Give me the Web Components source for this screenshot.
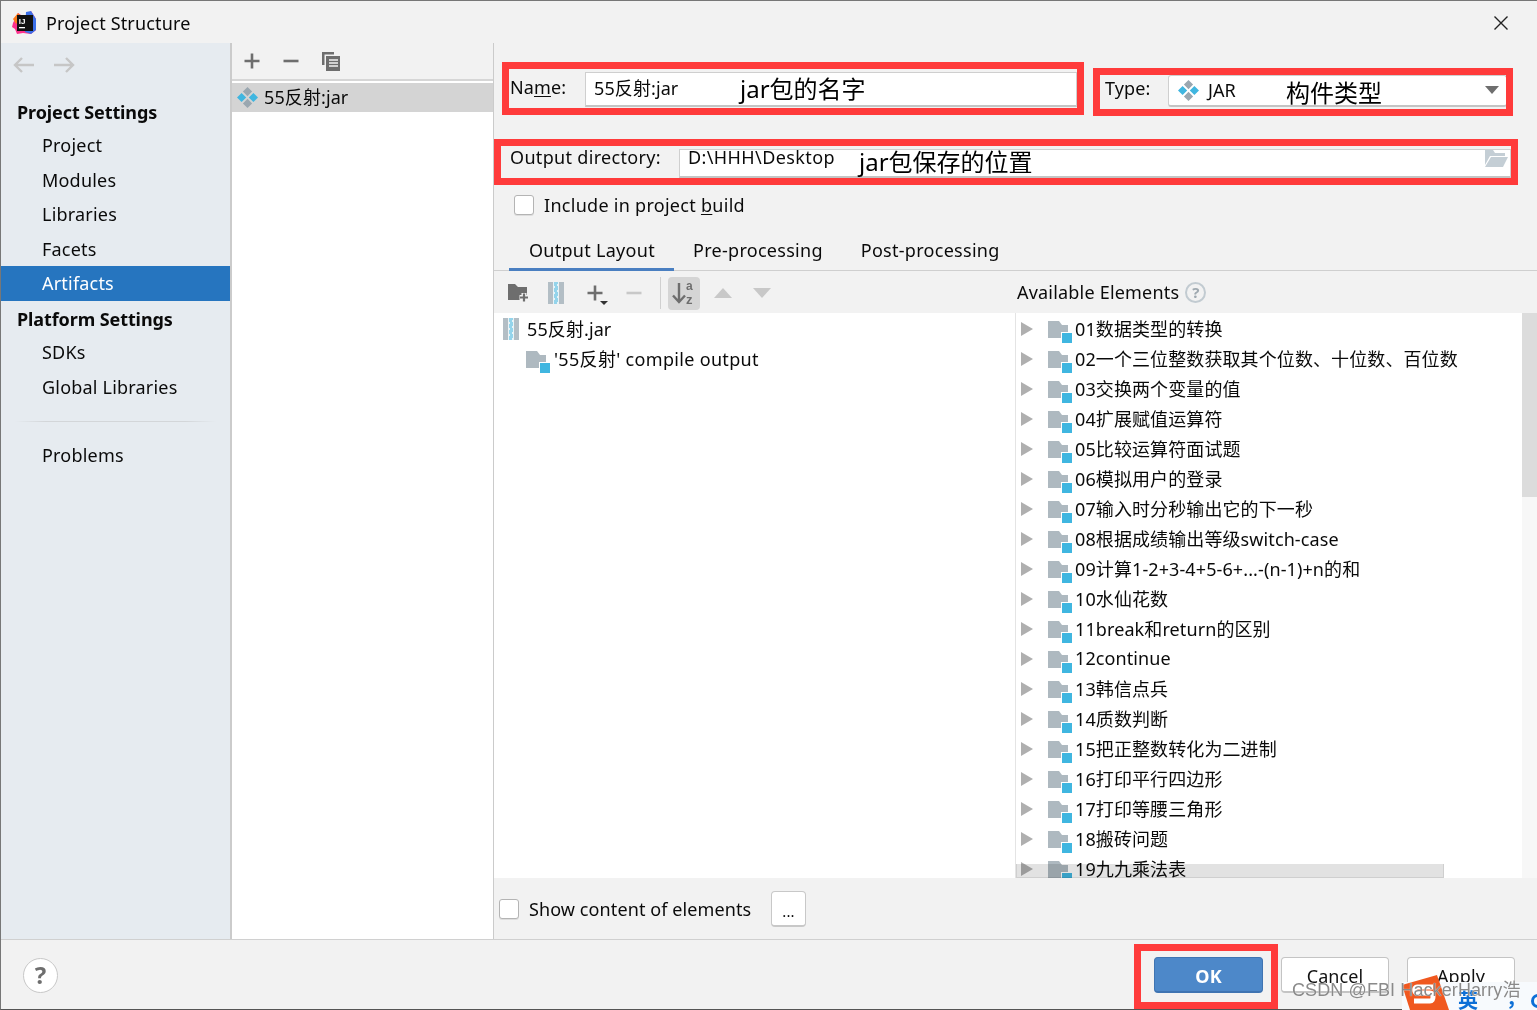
<!DOCTYPE html>
<html><head><meta charset="utf-8">
<style>
html,body{margin:0;padding:0;background:#fff;}
body{width:1537px;height:1010px;overflow:hidden;font-family:"Noto Sans","Noto Sans CJK SC",sans-serif;font-size:18px;letter-spacing:.1px;color:#0a0a0a;}
</style></head>
<body>
<ps-dialog></ps-dialog>
<script>
const ICONS={
 artifact:(s=21)=>`<svg width="${s}" height="${s}" viewBox="0 0 21 21"><path d="M10.500 0l4.600 4.600-4.600 4.600-4.600-4.600z M10.500 11.800l4.600 4.600-4.600 4.600-4.600-4.600z" fill="#9aa7b0"/><path d="M4.600 5.900l4.600 4.600-4.600 4.600L0 10.500z M16.400 5.900l4.600 4.600-4.600 4.600-4.600-4.600z" fill="#40b6e0"/></svg>`,
 folder:()=>`<svg width="24" height="22" viewBox="0 0 24 22" style="margin-top:6px"><path d="M0 0h11l3 4h6v13H0z" fill="#aeb9c0"/><rect x="13" y="11" width="11" height="11" fill="#fff"/><rect x="14" y="12" width="10" height="10" fill="#40b6e0"/></svg>`,
 zip:()=>`<svg width="16" height="22" viewBox="0 0 16 22"><rect width="16" height="22" fill="#b3bec5"/><rect x="5" y="0" width="6" height="22" fill="#e8f3f7"/><path d="M6 1h4M6 3h3M7 5h3M6 7h4M6 9h3M7 11h3M6 13h4M6 15h3M7 17h3M6 19h4M6 21h3" stroke="#40b6e0" stroke-width="1.2"/></svg>`,
 tri:()=>`<svg width="12" height="14" viewBox="0 0 12 14"><path d="M0 0l12 7L0 14z" fill="#afafaf"/></svg>`,
 plus:(c='#6e6e6e')=>`<svg width="18" height="18" viewBox="0 0 18 18"><path d="M9 1.500v15M1.500 9h15" stroke="${c}" stroke-width="2.600"/></svg>`,
 minus:(c='#6e6e6e')=>`<svg width="18" height="18" viewBox="0 0 18 18"><path d="M1.500 9h15" stroke="${c}" stroke-width="2.600"/></svg>`,
 copy:()=>`<svg width="20" height="20" viewBox="0 0 20 20"><path d="M1 1h12v2.500H3.500V14H1z" fill="#6e6e6e"/><path d="M5 5h14v15H5z" fill="#6e6e6e"/><path d="M8 9h9M8 12h9M8 15h9" stroke="#f2f2f2" stroke-width="1.300"/></svg>`,
 back:()=>`<svg width="22" height="16" viewBox="0 0 22 16"><path d="M21 8H2M9 1L2 8l7 7" fill="none" stroke="#c6c6c6" stroke-width="2.400"/></svg>`,
 fwd:()=>`<svg width="22" height="16" viewBox="0 0 22 16"><path d="M1 8h19M13 1l7 7-7 7" fill="none" stroke="#c6c6c6" stroke-width="2.400"/></svg>`,
 close:()=>`<svg width="16" height="16" viewBox="0 0 16 16" style="margin-top:1px"><path d="M1.500 1.500l13 13M14.500 1.500l-13 13" stroke="#222" stroke-width="1.400"/></svg>`,
 newdir:()=>`<svg width="22" height="20" viewBox="0 0 22 20"><path d="M0 1h7l3 3h9v13H0z" fill="#6e6e6e"/><path d="M16 10v9M11.500 14.500h9" stroke="#f2f2f2" stroke-width="5"/><path d="M16 10.500v8M12 14.500h8" stroke="#6e6e6e" stroke-width="2.200"/></svg>`,
 sort:()=>`<svg width="26" height="26" viewBox="0 0 26 26"><path d="M8 3v19M2 15.500l6 6.500 6-6.500" fill="none" stroke="#6e6e6e" stroke-width="2.400"/><text x="15" y="10" font-family="Liberation Sans,sans-serif" font-weight="700" font-size="12" fill="#6e6e6e">a</text><text x="15" y="24" font-family="Liberation Sans,sans-serif" font-weight="700" font-size="13" fill="#6e6e6e">z</text></svg>`,
 up:()=>`<svg width="18" height="10" viewBox="0 0 18 10"><path d="M9 0l9 10H0z" fill="#c8c8c8"/></svg>`,
 down:()=>`<svg width="18" height="10" viewBox="0 0 18 10"><path d="M0 0h18L9 10z" fill="#c8c8c8"/></svg>`,
 open:()=>`<svg width="23" height="18" viewBox="0 0 23 18" style="margin-bottom:8px"><path d="M0 0h8l2 3h10v3H5L0 15z" fill="#c4ced5"/><path d="M6 7h17l-5 10H0z" fill="#c4ced5"/></svg>`,
 ij:()=>`<svg width="25" height="25" viewBox="0 0 25 25"><path d="M1 13L6 3l6 4 7-6 5 8v11l-5 4-8-1-6 1-2-5-3-2z" fill="#fc318c"/><path d="M14 2l5-1 5 8v11l-5 4-6-2z" fill="#3b6fe8"/><path d="M1 9l5-6 4 4-6 7z" fill="#ff7a1a"/><rect x="5" y="5" width="16" height="16" fill="#111"/><rect x="7" y="17" width="6" height="1.300" fill="#fff"/><text x="6.800" y="14" font-family="Liberation Sans,sans-serif" font-weight="700" font-size="8" fill="#fff">IJ</text></svg>`
};

class Base extends HTMLElement{
 constructor(){super();this.attachShadow({mode:'open'});}
 set html(h){this.shadowRoot.innerHTML=h;}
}
class PsCheck extends Base{connectedCallback(){this.html=`<style>:host{display:flex;align-items:center;gap:10px;white-space:nowrap;letter-spacing:.28px}
 i{display:block;flex:none;width:18px;height:18px;background:#fff;border:1px solid #b4b4b4;border-radius:3px;box-shadow:0 1px 0 #ddd}</style><i></i><span><slot></slot></span>`;}}
customElements.define('ps-check',PsCheck);

class PsButton extends Base{connectedCallback(){const p=this.hasAttribute('primary');this.html=`<style>:host{display:block;box-sizing:border-box;height:36px;border-radius:4px;text-align:center;line-height:36px;
 background:${p?'#4d88c9':'#fff'};border:1px solid ${p?'#3f74b2':'#c4c4c4'};border-bottom-width:2px;color:${p?'#fff':'#111'};font-weight:${p?700:400}}</style><slot></slot>`;}}
customElements.define('ps-button',PsButton);

class PsTitlebar extends Base{connectedCallback(){this.html=`<style>:host{display:flex;align-items:center;height:42px;background:#f2f2f2;padding-left:11px;padding-right:28px;flex:none}
 span{margin-left:9px;flex:1;padding-top:2px;letter-spacing:.15px}</style>${ICONS.ij()}<span>Project Structure</span>${ICONS.close()}`;}}
customElements.define('ps-titlebar',PsTitlebar);

class PsNavItem extends Base{connectedCallback(){const h=this.hasAttribute('head'),s=this.hasAttribute('selected');this.html=`<style>:host{display:block;box-sizing:border-box;height:${h?32:34.5}px;line-height:${h?32:34.5}px;padding-left:${h?16:41}px;
 letter-spacing:${h?'-.1px':'.2px'};font-weight:${h?700:400};background:${s?'#2675bf':'none'};color:${s?'#fff':'inherit'}}</style><slot></slot>`;}}
customElements.define('ps-nav-item',PsNavItem);

class PsSidebar extends Base{connectedCallback(){this.html=`<style>:host{display:block;width:229px;flex:none;background:#e6ebf0;border-right:2px solid #cbcbcb}
 .nav{display:flex;gap:18px;padding:14px 0 0 12px;height:39px}
 hr{border:0;height:1px;margin:17px 14px 16px;background:linear-gradient(90deg,#e6ebf0,#d3d6d9 15%,#d3d6d9 85%,#e6ebf0)}
 .sp{height:2.500px}</style>
 <div class="nav">${ICONS.back()}${ICONS.fwd()}</div>
 <ps-nav-item head>Project Settings</ps-nav-item>
 <ps-nav-item>Project</ps-nav-item><ps-nav-item>Modules</ps-nav-item><ps-nav-item>Libraries</ps-nav-item><ps-nav-item>Facets</ps-nav-item>
 <ps-nav-item selected>Artifacts</ps-nav-item><div class="sp"></div>
 <ps-nav-item head>Platform Settings</ps-nav-item>
 <ps-nav-item>SDKs</ps-nav-item><ps-nav-item>Global Libraries</ps-nav-item>
 <hr><ps-nav-item>Problems</ps-nav-item>`;}}
customElements.define('ps-sidebar',PsSidebar);

class PsArtifacts extends Base{connectedCallback(){this.html=`<style>:host{display:flex;flex-direction:column;width:261px;flex:none;background:#fff;border-right:1px solid #cbcbcb}
 .bar{display:flex;align-items:center;gap:21px;height:36px;background:#f2f2f2;padding-left:11px;border-bottom:2px solid #d6d6d6}
 .sel{display:flex;align-items:center;gap:6px;height:29px;margin-top:2px;background:#d4d4d4;padding-left:5px}
 span{margin-bottom:3px}</style>
 <div class="bar">${ICONS.plus()}${ICONS.minus()}${ICONS.copy()}</div>
 <div class="sel">${ICONS.artifact()}<span>55反射:jar</span></div>`;}}
customElements.define('ps-artifacts',PsArtifacts);

class PsRow extends Base{connectedCallback(){this.html=`<style>:host{display:flex;align-items:center;height:30px;flex:none;white-space:nowrap}
 .tri{width:32px;padding-left:5px;box-sizing:border-box;display:flex}
 .f{display:flex;margin-right:3px}
 .t{margin-bottom:2px}</style>
 <div class="tri">${ICONS.tri()}</div><div class="f">${ICONS.folder()}</div><span class="t"><slot></slot></span>`;}}
customElements.define('ps-row',PsRow);

class PsAvailable extends Base{connectedCallback(){
 const rows=['01数据类型的转换','02一个三位整数获取其个位数、十位数、百位数','03交换两个变量的值','04扩展赋值运算符','05比较运算符面试题','06模拟用户的登录','07输入时分秒输出它的下一秒','08根据成绩输出等级switch-case','09计算1-2+3-4+5-6+...-(n-1)+n的和','10水仙花数','11break和return的区别','12continue','13韩信点兵','14质数判断','15把正整数转化为二进制','16打印平行四边形','17打印等腰三角形','18搬砖问题','19九九乘法表'];
 this.html=`<style>:host{display:flex;flex:1;min-width:0;background:#fff;border-left:1px solid #e4e4e4;position:relative}
 .list{flex:1;overflow:hidden;padding-top:1px;display:flex;flex-direction:column;padding-left:0}
 .track{width:15px;background:#f7f7f7;flex:none}
 .thumb{height:184px;background:#dcdcdc}
 .hbar{position:absolute;left:0;bottom:0;box-sizing:border-box;width:428px;height:14px;background:#e2e2e2;mix-blend-mode:multiply;border:1px solid #cfcfcf;border-top:0}</style>
 <div class="list">${rows.map(r=>`<ps-row>${r}</ps-row>`).join('')}</div>
 <div class="track"><div class="thumb"></div></div><div class="hbar"></div>`;}}
customElements.define('ps-available',PsAvailable);

class PsEditor extends Base{connectedCallback(){this.html=`<style>
 :host{display:flex;flex-direction:column;flex:1;min-width:0;background:#f2f2f2}
 .r1{display:flex;align-items:flex-end;margin-top:29px;height:35px;padding-left:16px}
 .l1{width:75px;align-self:center;padding-bottom:5px}
 .in{box-sizing:border-box;background:#fff;border:1px solid #cfcfcf;border-bottom:2px solid #c4c4c4;display:flex;align-items:center;padding-left:8px}
 .name{width:492px;height:35px;padding-bottom:5px}
 .l2{margin-left:28px;width:63px;align-self:center;padding-bottom:4px}
 .combo{width:339px;height:32px;border-radius:3px;gap:9px;position:relative;padding-left:9px}
 .combo span{margin-bottom:2px}
 .drop{position:absolute;right:7px;top:10px;width:0;height:0;border:7px solid transparent;border-top:8px solid #6e6e6e;border-bottom:0}
 .r2{display:flex;align-items:center;margin-top:42px;height:29px;padding-left:16px}
 .l3{width:169px;padding-bottom:14px;letter-spacing:.32px}
 .out{width:832px;height:29px;justify-content:space-between;padding-right:2px}
 .out span{margin-bottom:12px;letter-spacing:.4px}
 .inc{margin:16px 0 0 20px;height:22px}
 .tabs{display:flex;margin-top:16px;height:39px;border-bottom:1px solid #cfcfcf;padding-left:15px;box-sizing:border-box;white-space:nowrap;letter-spacing:.28px}
 .tab{padding:0 19px;line-height:36px;box-sizing:border-box;height:39px}
 .tab.on{border-bottom:3px solid #4a7fc1;width:165px;padding:0 20px}
 .tools{display:flex;height:42px;flex:none}
 .tl{width:521px;display:flex;align-items:center;padding:2px 0 0 14px;box-sizing:border-box;position:relative}
 .tl>*{flex:none}
 .tl span{display:flex}
 .sep{width:1px;height:32px;background:#d0d0d0}
 .sortb{width:32px;height:33px;background:#d5d5d5;border-radius:4px;align-items:center;justify-content:center}
 .caret{width:0;height:0;border:4px solid transparent;border-top:4px solid #333;border-bottom:0;margin:20px 17px 0 -4px}
 .tr{display:flex;align-items:center;padding:0 0 0 2px;gap:6px;letter-spacing:.2px}
 .q{box-sizing:border-box;width:21px;height:21px;border:2px solid #c2cbd1;border-radius:50%;color:#9fa9b0;font-size:15px;font-weight:700;text-align:center;line-height:17px}
 .body{flex:1;display:flex;min-height:0;overflow:hidden}
 .left{width:521px;flex:none;background:#fff;padding-top:1px;box-sizing:border-box}
 .lr{display:flex;align-items:center;height:30px;white-space:nowrap}
 .lr span{margin-bottom:2px}
 .bottom{display:flex;align-items:center;height:61px;flex:none;padding-left:5px}
 .bottom ps-check{width:252px;flex:none;letter-spacing:.1px}
 .dots{box-sizing:border-box;width:35px;height:36px;margin-left:20px;background:#fff;border:1px solid #c8c8c8;border-bottom-width:2px;border-radius:4px;text-align:center;line-height:38px;font-size:15px}
 u{text-decoration-thickness:1px;text-underline-offset:2px}
 </style>
 <div class="r1"><span class="l1">Na<u>m</u>e:</span><div class="in name">55反射:jar</div>
  <span class="l2">Type:</span><div class="in combo">${ICONS.artifact()}<span>JAR</span><i class="drop"></i></div></div>
 <div class="r2"><span class="l3">Output directory:</span><div class="in out"><span>D:\\HHH\\Desktop</span>${ICONS.open()}</div></div>
 <ps-check class="inc">Include in project <u>b</u>uild</ps-check>
 <div class="tabs"><div class="tab on">Output Layout</div><div class="tab">Pre-processing</div><div class="tab">Post-processing</div></div>
 <div class="tools">
  <div class="tl"><span style="margin-right:18px">${ICONS.newdir()}</span><span style="margin-right:22px">${ICONS.zip()}</span><span>${ICONS.plus()}</span><i class="caret"></i><span style="margin-right:17px">${ICONS.minus('#c8c8c8')}</span><i class="sep"></i><span class="sortb" style="margin:0 14px 0 7px">${ICONS.sort()}</span><span style="margin-right:21px">${ICONS.up()}</span><span>${ICONS.down()}</span></div>
  <div class="tr">Available Elements<div class="q">?</div></div>
 </div>
 <div class="body">
  <div class="left">
   <div class="lr" style="padding-left:9px;gap:8px">${ICONS.zip()}<span>55反射.jar</span></div>
   <div class="lr" style="padding-left:32px;gap:4px">${ICONS.folder()}<span style="letter-spacing:.32px">'55反射' compile output</span></div>
  </div>
  <ps-available></ps-available>
 </div>
 <div class="bottom"><ps-check>Show content of elements</ps-check><div class="dots">...</div></div>`;}}
customElements.define('ps-editor',PsEditor);

class PsFooter extends Base{connectedCallback(){this.html=`<style>:host{display:flex;align-items:center;flex:1;background:#f2f2f2;border-top:1px solid #d0d0d0;padding:0 22px}
 .help{box-sizing:border-box;width:35px;height:35px;margin-top:2px;border-radius:50%;background:#fff;border:1px solid #c8c8c8;color:#6e6e6e;font-weight:700;font-size:24px;text-align:center;line-height:32px;margin-right:auto}
 ps-button{width:108px;margin-left:18px;margin-top:0}
 ps-button[primary]{width:109px;}</style>
 <div class="help">?</div><ps-button primary>OK</ps-button><ps-button>Cancel</ps-button><ps-button>Apply</ps-button>`;}}
customElements.define('ps-footer',PsFooter);

class PsAnno extends Base{connectedCallback(){const a=this.getAttribute.bind(this);
 this.html=`<style>:host{position:absolute;display:block;box-sizing:border-box;left:${a('x')}px;top:${a('y')}px;width:${a('w')}px;height:${a('h')}px;border:${a('bw')||7}px solid #ff3b3b}</style>`;}}
customElements.define('ps-anno',PsAnno);

class PsLabel extends Base{connectedCallback(){const a=this.getAttribute.bind(this);
 this.html=`<style>:host{position:absolute;display:block;left:${a('x')}px;top:${a('y')}px;font-size:24px;line-height:34px;color:#000;white-space:nowrap;letter-spacing:0}</style><slot></slot>`;}}
customElements.define('ps-label',PsLabel);

class PsSogou extends Base{connectedCallback(){this.html=`<style>:host{position:absolute;display:block;left:1401px;top:981px;width:135px;height:28px;background:#f7fafd;overflow:visible}
 svg{position:absolute;left:0;top:-7px}
 b{position:absolute;font-family:"Noto Sans CJK SC",sans-serif;color:#0d6fd6;font-size:20px;line-height:20px;letter-spacing:0}
 .arc{position:absolute;left:129px;top:12px;width:8px;height:14px;border:3px solid #0d6fd6;border-right:0;border-radius:8px 0 0 8px;box-sizing:border-box}</style>
 <svg width="47" height="35" viewBox="0 0 47 35"><path d="M0 10L35 0l12 35H8z" fill="#f0581f"/><path d="M31 12H15c-3 0-3 6 0 6h13c4 0 4 8 0 8H12" fill="none" stroke="#fff" stroke-width="5"/></svg>
 <b style="left:56px;top:8px">英</b><b style="left:104px;top:6px">，</b><i class="arc"></i>`;}}
customElements.define('ps-sogou',PsSogou);

class PsWatermark extends Base{connectedCallback(){this.html=`<style>:host{position:absolute;display:block;left:1291px;top:976px;font:18px/26px "Liberation Sans","Noto Sans CJK SC",sans-serif;color:#8a8a8a;white-space:nowrap;letter-spacing:.1px;text-shadow:0 0 1px #fff}</style>CSDN @FBI HackerHarry浩`;}}
customElements.define('ps-watermark',PsWatermark);

class PsDialog extends Base{connectedCallback(){this.html=`<style>
 :host{display:flex;flex-direction:column;box-sizing:border-box;width:1537px;height:1010px;border-top:1px solid #777;border-left:1px solid #777;border-bottom:1px solid #555;position:relative;background:#f2f2f2}
 .main{display:flex;height:896px;flex:none;min-height:0}
 </style>
 <ps-titlebar></ps-titlebar>
 <div class="main"><ps-sidebar></ps-sidebar><ps-artifacts></ps-artifacts><ps-editor></ps-editor></div>
 <ps-footer></ps-footer>
 <ps-anno x="501" y="61" w="582" h="53"></ps-anno>
 <ps-anno x="1092" y="67" w="420" h="48"></ps-anno>
 <ps-anno x="493" y="138" w="1024" h="46"></ps-anno>
 <ps-anno x="1133" y="943" w="144" h="65"></ps-anno>
 <ps-label x="739" y="71">jar包的名字</ps-label>
 <ps-label x="1285" y="75">构件类型</ps-label>
 <ps-label x="858" y="144">jar包保存的位置</ps-label>
 <ps-sogou></ps-sogou><ps-watermark></ps-watermark>`;}}
customElements.define('ps-dialog',PsDialog);
</script>
</body></html>
